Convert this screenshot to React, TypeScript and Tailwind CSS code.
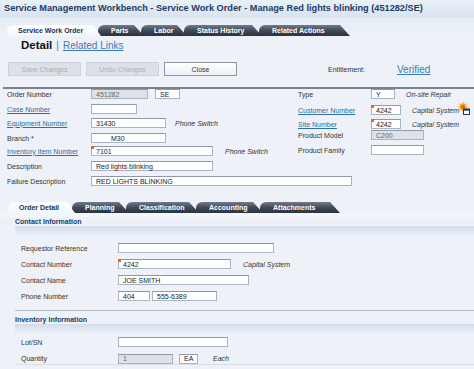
import React from 'react';

type FieldProps = {
  w: string;
  value?: string;
  ro?: boolean;
  mark?: boolean;
  pad?: string;
};

// plain text box, grey when read-only, little orange flag when it has a visual assist
function Field({ w, value = '', ro, mark, pad = 'pl-[4px]' }: FieldProps) {
  return (
    <div
      className={`relative h-[10px] shrink-0 border border-[#aab4c1] border-t-[#8e99a7] flex items-center ${pad} ${w} ${
        ro ? 'bg-[#dde1e8] text-[#666]' : 'bg-white text-[#222]'
      }`}
    >
      {mark && <span className="absolute -left-[1px] -top-[1px] w-[3px] h-[3px] bg-[#e8641e]" />}
      <span className="leading-none">{value}</span>
    </div>
  );
}

function Label({ text, link, w }: { text: string; link?: boolean; w: string }) {
  return (
    <div className={`shrink-0 ${w} ${link ? 'text-[#2f6fa3] underline' : 'text-[#333]'}`}>{text}</div>
  );
}

function Note({ text, className = '' }: { text: string; className?: string }) {
  return <span className={`italic text-[#333] ${className}`}>{text}</span>;
}

function DarkTab({ label, w }: { label: string; w: string }) {
  return (
    <div
      className={`h-[11px] -ml-[3px] flex items-center pl-[13px] rounded-tl-[6px] bg-gradient-to-b from-[#737c8a] via-[#414a59] to-[#2b3340] text-white font-bold text-[7px] [clip-path:polygon(0_0,calc(100%_-_10px)_0,100%_100%,0_100%)] ${w}`}
    >
      {label}
    </div>
  );
}

function ActiveTab({ label, w }: { label: string; w: string }) {
  return (
    <div
      className={`relative z-10 h-[11px] flex items-center pl-[11px] rounded-tl-[6px] bg-gradient-to-b from-white to-[#f3f6fa] text-[#1d3150] font-bold text-[7px] [clip-path:polygon(0_0,calc(100%_-_8px)_0,100%_100%,0_100%)] ${w}`}
    >
      {label}
    </div>
  );
}

function SectionHead({ text }: { text: string }) {
  return (
    <div>
      <div className="h-[9px] flex items-center font-bold text-[7px] text-[#1d3b66]">{text}</div>
      <div className="h-[9px] bg-gradient-to-b from-[#d3deeb] to-[#e9eef6]" />
    </div>
  );
}

function AssistIcon() {
  return (
    <svg width="13" height="14" viewBox="0 0 13 14" className="shrink-0">
      <path d="M6 0.5 L7.2 3.3 L10 2 L8.8 4.8 L11.5 6 L8.8 7.2 L10 10 L7.2 8.7 L6 11.5 L4.8 8.7 L2 10 L3.2 7.2 L0.5 6 L3.2 4.8 L2 2 L4.8 3.3 Z" fill="#f5b41c" />
      <circle cx="6" cy="6" r="2" fill="#e85d1a" />
      <rect x="6.5" y="8" width="6" height="5.5" fill="#fff" stroke="#24324a" strokeWidth="1" />
      <rect x="6.5" y="8" width="6" height="1.6" fill="#24324a" />
    </svg>
  );
}

export default function App() {
  return (
    <div className="w-[474px] h-[369px] overflow-hidden bg-[#eef1f7] font-['Liberation_Sans',Arial,sans-serif] text-[7px] text-[#333] leading-none">
      {/* title bar */}
      <div className="h-[18px] pl-[4px] flex items-center bg-gradient-to-b from-[#e9f0f8] to-[#d8e3ef] text-[9.2px] font-bold text-[#1f3d66] whitespace-nowrap">
        Service Management Workbench - Service Work Order - Manage Red lights blinking (451282/SE)
      </div>

      {/* form tabs */}
      <div className="h-[18px] pl-[7px] flex items-end bg-gradient-to-b from-[#e6edf5] to-[#eef1f7]">
        <ActiveTab label="Service Work Order" w="w-[94px]" />
        <DarkTab label="Parts" w="w-[46px]" />
        <DarkTab label="Labor" w="w-[46px]" />
        <DarkTab label="Status History" w="w-[78px]" />
        <DarkTab label="Related Actions" w="w-[91px]" />
      </div>

      <div className="h-[20px] pl-[21px] flex items-center gap-[4px]">
        <span className="text-[11.5px] font-bold text-[#111]">Detail</span>
        <span className="text-[10px] text-[#5a7ea6]">|</span>
        <span className="text-[10px] text-[#3a7bb5] underline">Related Links</span>
      </div>

      {/* action buttons */}
      <div className="mt-[6px] h-[14px] pl-[8px] flex items-center">
        <div className="w-[73px] h-[14px] flex items-center justify-center bg-[#dce1e8] border border-[#cdd3dc] text-[#a9b1bc]">Save Changes</div>
        <div className="ml-[5px] w-[73px] h-[14px] flex items-center justify-center bg-[#dce1e8] border border-[#cdd3dc] text-[#a9b1bc]">Undo Changes</div>
        <div className="ml-[5px] w-[73px] h-[14px] flex items-center justify-center bg-gradient-to-b from-white to-[#eceff4] border border-[#8c97a5] text-[#333]">Close</div>
        <span className="ml-[91px] text-[#333]">Entitlement:</span>
        <span className="ml-[32px] mt-[1px] text-[10px] text-[#3a7bb5] underline">Verified</span>
      </div>

      <div className="mt-[11px] ml-[3px] h-[2px] bg-[#7a828d]" />

      {/* header fields */}
      <div className="pl-[7px]">
        <div className="flex">
          <div className="w-[291px] flex flex-col">
            <div className="mt-[0px] h-[10px] flex items-center">
              <Label text="Order Number" w="w-[84px]" />
              <Field w="w-[57px]" value="451282" ro />
              <div className="ml-[7px]"><Field w="w-[25px]" value="SE" /></div>
            </div>
            <div className="mt-[5px] h-[10px] flex items-center">
              <Label text="Case Number" link w="w-[84px]" />
              <Field w="w-[46px]" />
            </div>
            <div className="mt-[4px] h-[10px] flex items-center">
              <Label text="Equipment Number" link w="w-[84px]" />
              <Field w="w-[75px]" value="31430" />
              <Note text="Phone Switch" className="ml-[9px]" />
            </div>
            <div className="mt-[5px] h-[10px] flex items-center">
              <Label text="Branch  *" w="w-[84px]" />
              <Field w="w-[75px]" value="M30" pad="pl-[19px]" />
            </div>
            <div className="mt-[3px] h-[10px] flex items-center">
              <Label text="Inventory Item Number" link w="w-[84px]" />
              <Field w="w-[122px]" value="7101" mark />
              <Note text="Phone Switch" className="ml-[12px]" />
            </div>
          </div>

          <div className="flex flex-col">
            <div className="h-[10px] flex items-center">
              <Label text="Type" w="w-[73px]" />
              <Field w="w-[24px]" value="Y" />
              <Note text="On-site Repair" className="ml-[11px]" />
            </div>
            <div className="mt-[6px] h-[10px] flex items-center">
              <Label text="Customer Number" link w="w-[73px]" />
              <Field w="w-[30px]" value="4242" mark />
              <Note text="Capital System" className="ml-[11px]" />
              <div className="-ml-[2px] -mt-[4px]"><AssistIcon /></div>
            </div>
            <div className="mt-[4px] h-[10px] flex items-center">
              <Label text="Site Number" link w="w-[73px]" />
              <Field w="w-[30px]" value="4242" mark />
              <Note text="Capital System" className="ml-[11px]" />
            </div>
            <div className="mt-[1px] h-[10px] flex items-center">
              <Label text="Product Model" w="w-[73px]" />
              <Field w="w-[53px]" value="C200" ro />
            </div>
            <div className="mt-[5px] h-[10px] flex items-center">
              <Label text="Product Family" w="w-[73px]" />
              <Field w="w-[53px]" />
            </div>
          </div>
        </div>

        <div className="mt-[5px] h-[10px] flex items-center">
          <Label text="Description" w="w-[84px]" />
          <Field w="w-[122px]" value="Red lights blinking" />
        </div>
        <div className="mt-[5px] h-[10px] flex items-center">
          <Label text="Failure Description" w="w-[84px]" />
          <Field w="w-[261px]" value="RED LIGHTS BLINKING" />
        </div>
      </div>

      {/* detail tabs */}
      <div className="mt-[16px] h-[11px] pl-[8px] flex items-end">
        <ActiveTab label="Order Detail" w="w-[67px]" />
        <DarkTab label="Planning" w="w-[57px]" />
        <DarkTab label="Classification" w="w-[73px]" />
        <DarkTab label="Accounting" w="w-[67px]" />
        <DarkTab label="Attachments" w="w-[80px]" />
      </div>

      <div className="h-[4px] bg-[#f3f6fa]" />

      <div className="ml-[15px] h-[148px] border-b border-[#d9dee6]">
        <SectionHead text="Contact Information" />
        <div className="pl-[6px]">
          <div className="mt-[8px] h-[10px] flex items-center">
            <Label text="Requestor Reference" w="w-[97px]" />
            <Field w="w-[156px]" />
          </div>
          <div className="mt-[6px] h-[10px] flex items-center">
            <Label text="Contact Number" w="w-[97px]" />
            <Field w="w-[113px]" value="4242" mark />
            <Note text="Capital System" className="ml-[12px]" />
          </div>
          <div className="mt-[6px] h-[10px] flex items-center">
            <Label text="Contact Name" w="w-[97px]" />
            <Field w="w-[131px]" value="JOE SMITH" />
          </div>
          <div className="mt-[6px] h-[10px] flex items-center">
            <Label text="Phone Number" w="w-[97px]" />
            <Field w="w-[32px]" value="404" />
            <div className="ml-[2px]"><Field w="w-[65px]" value="555-6389" /></div>
          </div>
        </div>

        <div className="mt-[9px] h-[1px] bg-[#b9c0ca]" />

        <div className="mt-[4px]">
          <SectionHead text="Inventory Information" />
        </div>
        <div className="pl-[6px]">
          <div className="mt-[4px] h-[10px] flex items-center">
            <Label text="Lot/SN" w="w-[97px]" />
            <Field w="w-[110px]" />
          </div>
          <div className="mt-[6px] h-[11px] flex items-center">
            <Label text="Quantity" w="w-[97px]" />
            <Field w="w-[55px]" value="1" ro />
            <div className="ml-[6px]"><Field w="w-[19px]" value="EA" /></div>
            <Note text="Each" className="ml-[15px]" />
          </div>
        </div>
      </div>
    </div>
  );
}
